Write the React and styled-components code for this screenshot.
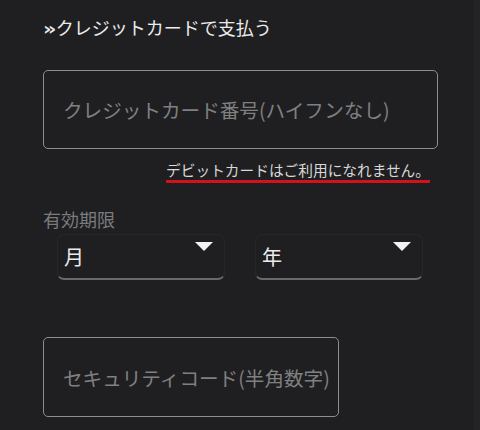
import React from "react";
import styled, { createGlobalStyle } from "styled-components";

const Global = createGlobalStyle`
  html, body {
    margin: 0;
    padding: 0;
    background: linear-gradient(to right, #1f1f21 474px, #232325 474px);
    min-height: 430px;
  }
  body {
    font-family: "Noto Sans CJK JP", "Noto Sans", sans-serif;
  }
`;

const Page = styled.div`
  padding: 15px 0 0 43px;
  width: 437px;
  box-sizing: border-box;
`;

const Title = styled.h2`
  margin: 0;
  height: 24px;
  font-size: 18px;
  line-height: 24px;
  font-weight: 400;
  color: #ebebeb;
  white-space: nowrap;
`;

const Mark = styled.span`
  display: inline-block;
  font-family: "DejaVu Sans", sans-serif;
  font-weight: 700;
  font-size: 18px;
  line-height: 18px;
  margin-right: 1px;
  transform: scaleX(1.15);
  transform-origin: left center;
`;

const TextBox = styled.div`
  box-sizing: border-box;
  width: ${(p) => p.$w}px;
  height: ${(p) => p.$h}px;
  margin-top: ${(p) => p.$mt}px;
  border: 1.5px solid #8b8d8e;
  border-radius: 5px;
  display: flex;
  align-items: center;
  padding-left: 19px;
  font-size: 19.6px;
  color: #7f8081;
  white-space: nowrap;
`;

const NoteRow = styled.div`
  width: 395px;
  margin-top: 12px;
  padding-right: 8px;
  box-sizing: border-box;
  text-align: right;
  line-height: 0;
`;

const Note = styled.span`
  display: inline-block;
  font-size: 14.7px;
  line-height: 18px;
  color: #d8d8d8;
  padding-bottom: 1px;
  border-bottom: 3px solid #d3121c;
  border-radius: 1px;
`;

const Label = styled.div`
  margin-top: 25px;
  font-size: 18px;
  line-height: 22px;
  color: #7a7b7c;
`;

const SelectRow = styled.div`
  display: flex;
  gap: 30px;
  margin-top: 4px;
  margin-left: 14px;
`;

const Select = styled.div`
  box-sizing: border-box;
  width: 168px;
  height: 46px;
  border: 1px solid rgba(255, 255, 255, 0.035);
  border-bottom: 2px solid #676a6b;
  border-radius: 7px;
  display: flex;
  align-items: center;
  justify-content: space-between;
  padding: 0 11px 0 6px;
  font-size: 20px;
  color: #ececec;
`;

const Caret = styled.span`
  align-self: flex-start;
  margin-top: 7px;
  width: 0;
  height: 0;
  border-left: 9px solid transparent;
  border-right: 9px solid transparent;
  border-top: 9px solid #f2f2f2;
`;

export default function App() {
  return (
    <>
      <Global />
      <Page>
        <Title>
          <Mark>»</Mark>クレジットカードで支払う
        </Title>
        <TextBox $w={395} $h={79} $mt={31}>
          クレジットカード番号(ハイフンなし)
        </TextBox>
        <NoteRow>
          <Note>デビットカードはご利用になれません。</Note>
        </NoteRow>
        <Label>有効期限</Label>
        <SelectRow>
          <Select>
            <span>月</span>
            <Caret />
          </Select>
          <Select>
            <span>年</span>
            <Caret />
          </Select>
        </SelectRow>
        <TextBox $w={296} $h={80} $mt={57}>
          セキュリティコード(半角数字)
        </TextBox>
      </Page>
    </>
  );
}
